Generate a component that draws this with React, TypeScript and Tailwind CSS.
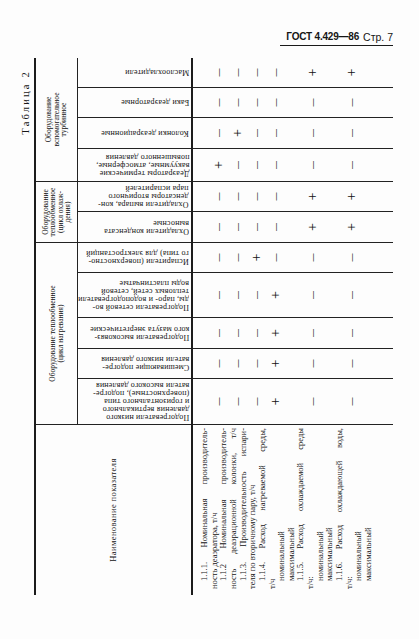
import React from 'react';

type Col = { w: string; name: string[]; marks: string };
type Group = { w: string; title: string[]; cols: Col[] };

// Table is printed in landscape: columns run from page bottom (left) to page top (right)
const GROUPS: Group[] = [
  {
    w: 'w-[182px]',
    title: ['Оборудование теплообменное', '(цикл нагревания)'],
    cols: [
      {
        w: 'w-[46px]',
        name: [
          'Подогреватели низкого',
          'давления вертикального',
          'и горизонтального типа',
          '(поверхностные), подогре-',
          'ватели высокого давления',
        ],
        marks: '---+--',
      },
      { w: 'w-[30px]', name: ['Смешивающие подогре-', 'ватели низкого давления'], marks: '---+--' },
      { w: 'w-[31px]', name: ['Подогреватели высоковяз-', 'кого мазута энергетические'], marks: '---+--' },
      {
        w: 'w-[45px]',
        name: ['Подогреватели сетевой во-', 'ды, паро- и водоподогреватели', 'тепловых сетей, сетевой', 'воды пластинчатые'],
        marks: '---+--',
      },
      { w: 'w-[30px]', name: ['Испарители (поверхностно-', 'го типа) для электростанций'], marks: '--+---' },
    ],
  },
  {
    w: 'w-[61px]',
    title: ['Оборудование', 'теплообменное', '(цикл охлаж-', 'дения)'],
    cols: [
      { w: 'w-[31px]', name: ['Охладители конденсата', 'выносные'], marks: '----++' },
      { w: 'w-[30px]', name: ['Охладители выпара, кон-', 'денсаторы вторичного', 'пара испарителей'], marks: '----++' },
    ],
  },
  {
    w: 'w-[124px]',
    title: ['Оборудование', 'вспомогательное', 'турбинное'],
    cols: [
      {
        w: 'w-[33px]',
        name: ['Деаэраторы термические', 'вакуумные, атмосферные,', 'повышенного давления'],
        marks: '+-----',
      },
      { w: 'w-[31px]', name: ['Колонки деаэрационные'], marks: '-+----' },
      { w: 'w-[30px]', name: ['Баки деаэраторные'], marks: '------' },
      { w: 'w-[30px]', name: ['Маслоохладители'], marks: '----++' },
    ],
  },
];

type Line = { t: string; indent?: boolean; justify?: boolean };
type Row = { h: string; pt: string; lines: Line[] };

const ROWS: Row[] = [
  {
    h: 'h-[19.3px]',
    pt: 'pt-[14px]',
    lines: [
      { t: '1.1.1. Номинальная производитель-', indent: true, justify: true },
      { t: 'ность деаэратора, т/ч' },
    ],
  },
  {
    h: 'h-[19.3px]',
    pt: 'pt-[13.5px]',
    lines: [
      { t: '1.1.2 Номинальная производитель-', indent: true, justify: true },
      { t: 'ность деаэрационной колонки, т/ч', justify: true },
    ],
  },
  {
    h: 'h-[19.3px]',
    pt: 'pt-[13.2px]',
    lines: [
      { t: '1.1.3. Производительность испари-', indent: true, justify: true },
      { t: 'теля по вторичному пару, т/ч' },
    ],
  },
  {
    h: 'h-[38.6px]',
    pt: 'pt-[12.9px]',
    lines: [
      { t: '1.1.4. Расход нагреваемой среды,', indent: true, justify: true },
      { t: 'т/ч' },
      { t: 'номинальный', indent: true },
      { t: 'максимальный', indent: true },
    ],
  },
  {
    h: 'h-[38.6px]',
    pt: 'pt-[11.3px]',
    lines: [
      { t: '1.1.5. Расход охлаждаемой среды', indent: true, justify: true },
      { t: 'т/ч:' },
      { t: 'номинальный', indent: true },
      { t: 'максимальный', indent: true },
    ],
  },
  {
    h: 'h-[38.6px]',
    pt: 'pt-[11.7px]',
    lines: [
      { t: '1.1.6. Расход охлаждающей воды,', indent: true, justify: true },
      { t: 'т/ч:' },
      { t: 'номинальный', indent: true },
      { t: 'максимальный', indent: true },
    ],
  },
];

const Mark = ({ m }: { m: string }) =>
  m === '+' ? (
    <span className="block text-[14px] leading-[10px] text-[#111]">+</span>
  ) : (
    <span className="block text-[8px] leading-[10px] font-bold text-[#1a1a1a]">—</span>
  );

const LandscapeTable = () => (
  <div className="w-[537px] h-[359px] origin-top-left -rotate-90 translate-y-[537px] flex flex-col border-t-2 border-[#1c1c1c] text-[#121212]">
    {/* Header */}
    <div className="flex h-[157px] border-b-2 border-[#1c1c1c]">
      <div className="w-[170px] flex items-center justify-center text-[8.5px] tracking-[0.4px]">
        Наименование показателя
      </div>
      {GROUPS.map((g) => (
        <div key={g.title.join()} className={`${g.w} flex flex-col`}>
          <div className="h-[42px] border-l border-b border-[#222] flex items-center justify-center text-center text-[7.5px] leading-[7.5px]">
            <div>
              {g.title.map((t) => (
                <div key={t}>{t}</div>
              ))}
            </div>
          </div>
          <div className="flex flex-1">
            {g.cols.map((c) => (
              <div key={c.name[0]} className={`${c.w} border-l border-[#222] flex items-end justify-center pb-[2px]`}>
                <div className="[writing-mode:vertical-rl] rotate-180 text-[8px] leading-[8px] tracking-[0.2px] whitespace-nowrap">
                  {c.name.map((t) => (
                    <div key={t}>{t}</div>
                  ))}
                </div>
              </div>
            ))}
          </div>
        </div>
      ))}
    </div>

    {/* Body */}
    <div className="flex flex-1">
      <div className="w-[170px] pt-[7px] pl-[6px] pr-[3px] text-[8.5px] leading-[9.65px]">
        {ROWS.map((r) => (
          <div key={r.lines[0].t} className={r.h}>
            {r.lines.map((l) => (
              <div
                key={l.t}
                className={`${l.indent ? 'pl-[8px]' : ''} ${l.justify ? 'text-justify [text-align-last:justify]' : ''} whitespace-nowrap`}
              >
                {l.t}
              </div>
            ))}
          </div>
        ))}
      </div>
      {GROUPS.flatMap((g) => g.cols).map((c) => (
        <div key={c.name[0]} className={`${c.w} border-l border-[#222] pt-[7px] flex flex-col`}>
          {ROWS.map((r, i) => (
            <div key={i} className={`${r.h} ${r.pt} flex justify-center`}>
              <Mark m={c.marks[i]} />
            </div>
          ))}
        </div>
      ))}
    </div>
  </div>
);

export default function App() {
  return (
    <div className="w-[419px] h-[639px] bg-[#fdfdfd] text-[#161616] overflow-hidden font-['Liberation_Serif','Times_New_Roman',serif]">
      <div className="flex pl-[20px] pt-[28px]">
        {/* Caption */}
        <div className="w-[14px] pt-[42px]">
          <div className="[writing-mode:vertical-rl] rotate-180 text-[10.5px] leading-[12px] tracking-[2.2px]">
            Таблица 2
          </div>
        </div>

        <div className="flex flex-col">
          {/* Page header */}
          <div className="h-[30px] flex justify-end">
            <div className="w-[113px] h-[18px] border-b-[1.5px] border-[#1a1a1a] flex items-end justify-end pb-[3px] leading-none">
              <span className="font-['Liberation_Sans',Arial,sans-serif] font-bold text-[10px] tracking-[-0.2px]">
                ГОСТ 4.429—86
              </span>
              <span className="ml-[4px] font-['Liberation_Sans',Arial,sans-serif] text-[10.5px]">Стр. 7</span>
            </div>
          </div>

          {/* Rotated table */}
          <div className="w-[359px] h-[537px]">
            <LandscapeTable />
          </div>
        </div>
      </div>
    </div>
  );
}
